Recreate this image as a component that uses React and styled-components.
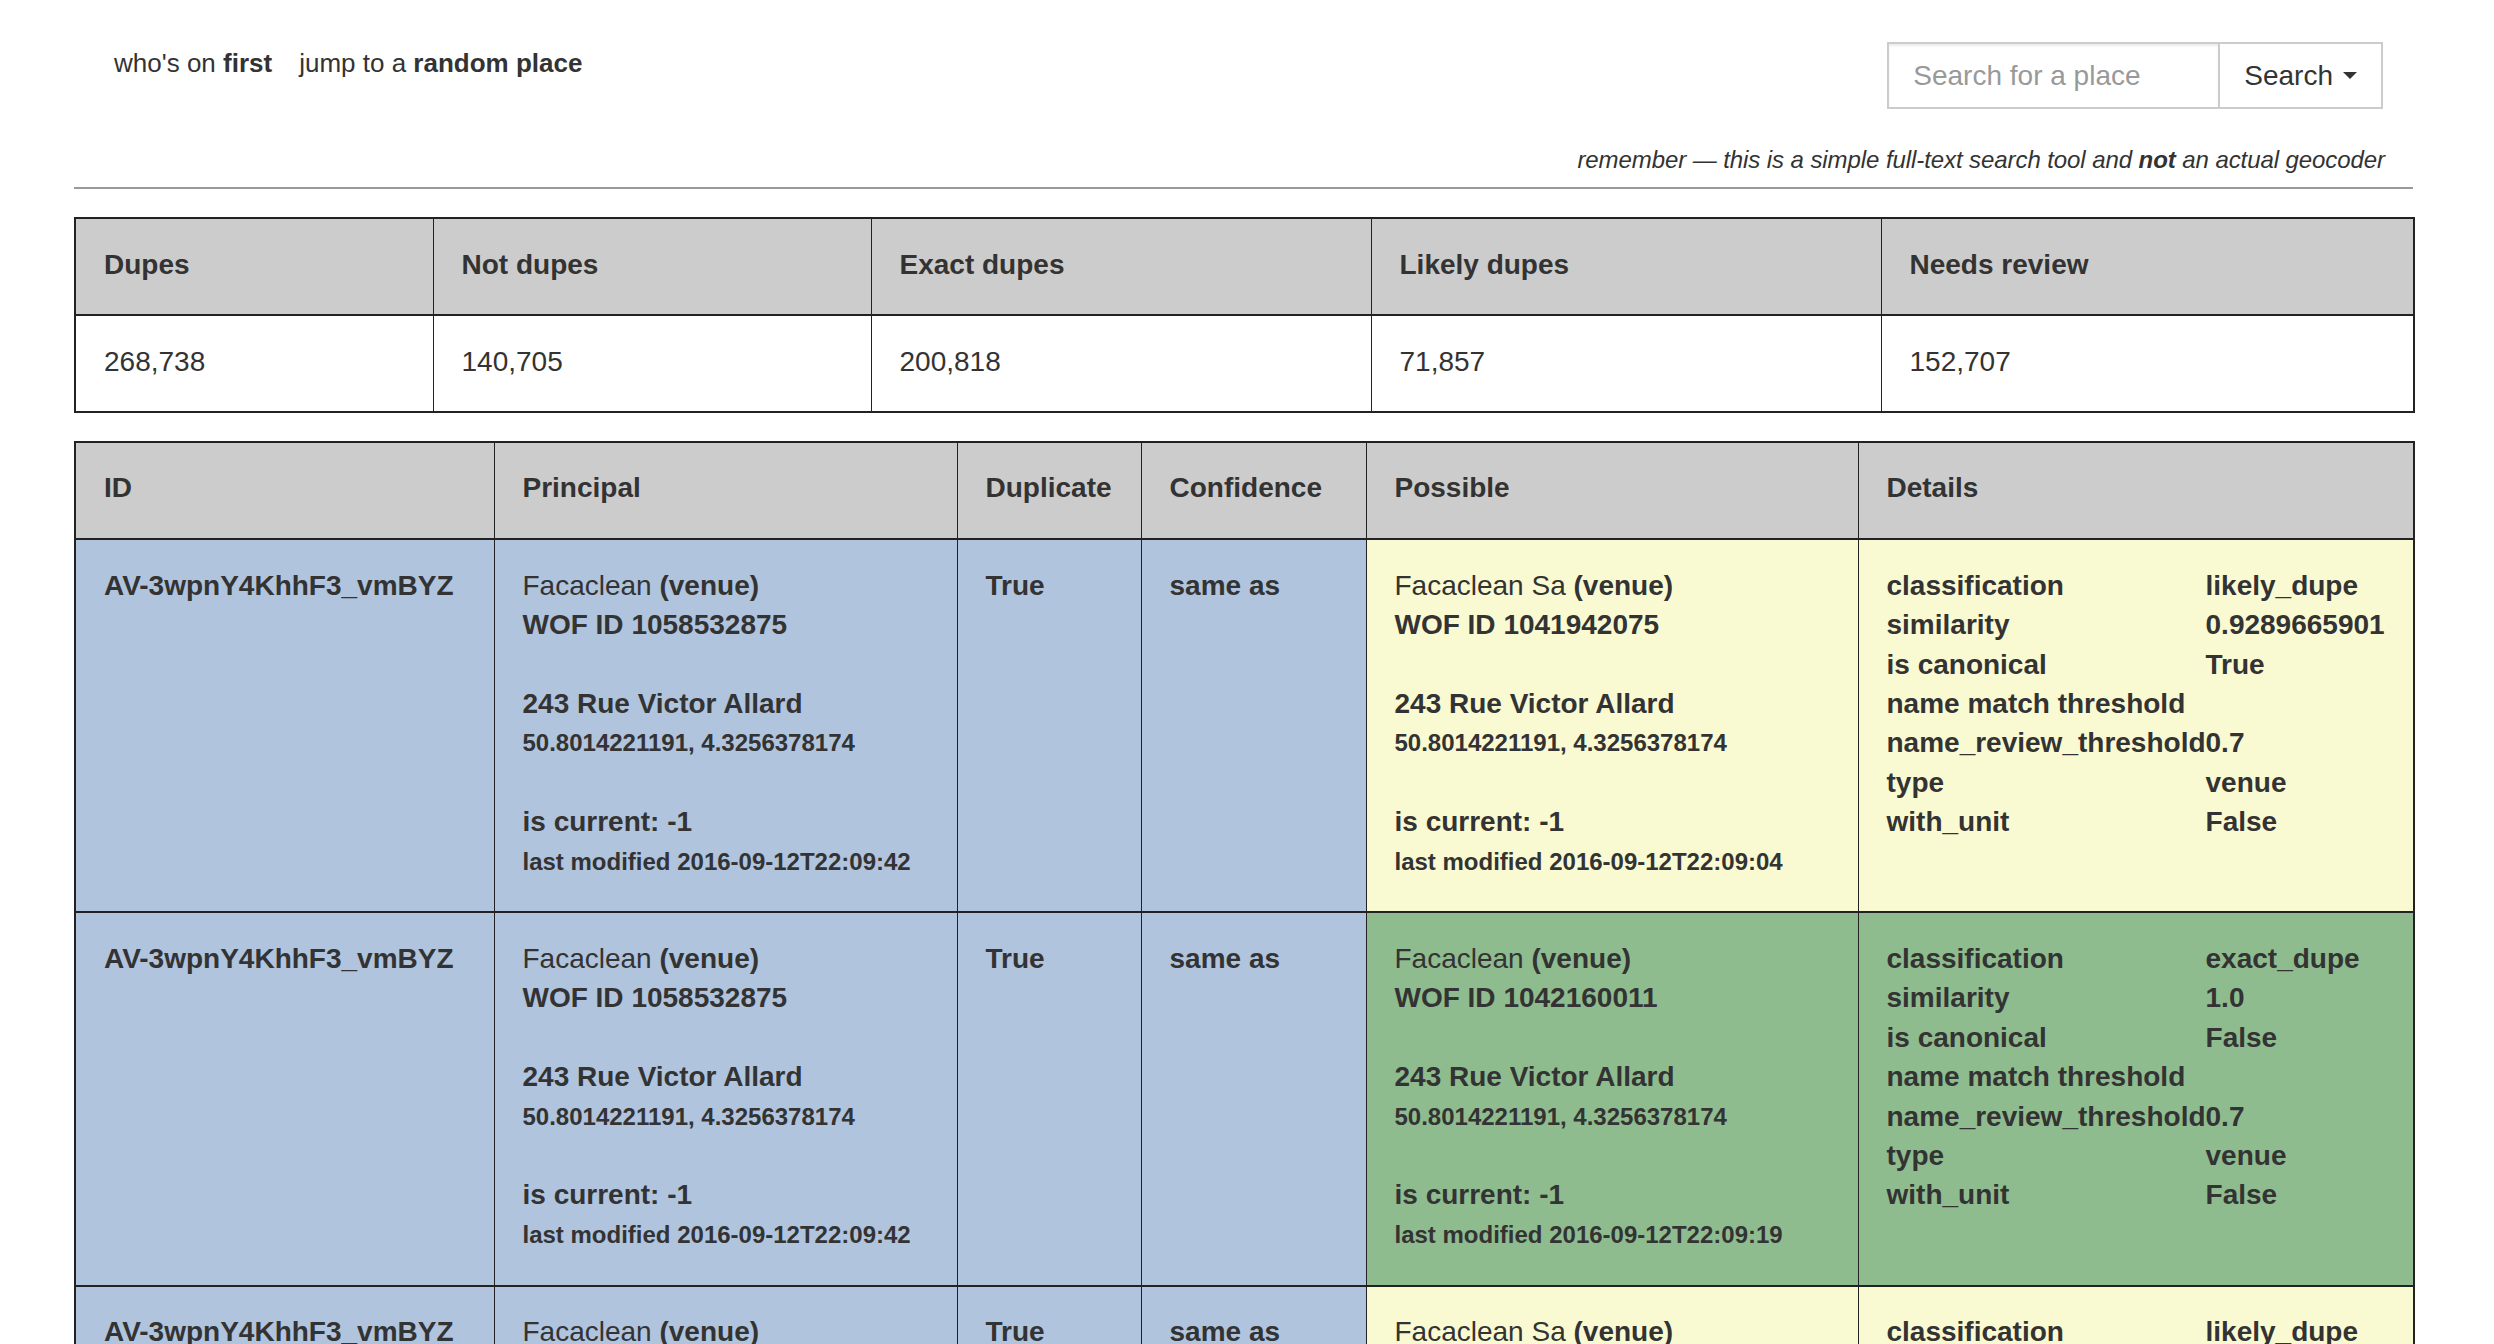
import React from 'react';
import styled, { createGlobalStyle } from 'styled-components';

const GlobalStyle = createGlobalStyle`
  html, body { margin: 0; padding: 0; background: #fff; }
  body {
    font-family: "Liberation Sans", Arial, Helvetica, sans-serif;
    color: #333;
    font-size: 28px;
    line-height: 39.4px;
  }
  * { box-sizing: border-box; }
`;

const Page = styled.div`
  width: 2339px;
  margin-left: 74px;
  padding-bottom: 80px;
`;

const Header = styled.header`
  padding: 42px 28px 0 40px;
`;

const TopRow = styled.div`
  display: flex;
  justify-content: space-between;
  align-items: flex-start;
`;

const Nav = styled.nav`
  display: flex;
  gap: 27px;
  font-size: 26px;
  line-height: 37px;
  padding-top: 3px;
`;

const NavLink = styled.a`
  color: #333;
  text-decoration: none;
  b { font-weight: bold; }
`;

const SearchForm = styled.form`
  display: flex;
  margin: 0 2px 0 0;
`;

const SearchInput = styled.input`
  width: 333px;
  height: 67px;
  border: 2px solid #ccc;
  border-radius: 0;
  padding: 0 24px;
  font-family: "Liberation Sans", Arial, sans-serif;
  font-size: 28px;
  color: #555;
  box-shadow: inset 0 2px 2px rgba(0, 0, 0, 0.075);
  outline: none;
  &::placeholder { color: #999; }
`;

const SearchButton = styled.button`
  height: 67px;
  border: 2px solid #ccc;
  border-left: none;
  border-radius: 0;
  background: #fff;
  padding: 0 24px;
  display: flex;
  align-items: center;
  gap: 10px;
  font-family: "Liberation Sans", Arial, sans-serif;
  font-size: 28px;
  color: #333;
`;

const Caret = styled.span`
  width: 0;
  height: 0;
  border-top: 7px solid #333;
  border-left: 7px solid transparent;
  border-right: 7px solid transparent;
`;

const Note = styled.p`
  margin: 34px 0 0;
  text-align: right;
  font-size: 24px;
  line-height: 34px;
  font-style: italic;
  letter-spacing: -0.08px;
`;

const Rule = styled.hr`
  margin: 10px 0 0;
  height: 0;
  border: 0;
  border-top: 2px solid #999;
`;

const Table = styled.table`
  width: 2339px;
  table-layout: fixed;
  border-collapse: collapse;
  border: 2px solid #222;
  margin-top: ${(p) => p.$top}px;
`;

const Th = styled.th`
  background: #ccc;
  text-align: left;
  font-weight: bold;
  padding: 25.5px 28px 30.5px;
  border-top: 2px solid #222;
  border-left: 1px solid #222;
  vertical-align: top;
`;

const Td = styled.td`
  background: ${(p) => p.$bg || '#fff'};
  font-weight: ${(p) => (p.$bold ? 'bold' : 'normal')};
  padding: 25.5px 28px ${(p) => (p.$tight ? '29.5px' : '30.5px')};
  border-top: 2px solid #222;
  border-left: 1px solid #222;
  vertical-align: top;
`;

const PlaceName = styled.div`
  font-weight: normal;
  b { font-weight: bold; }
`;

const Strong = styled.div`
  font-weight: bold;
  margin-top: ${(p) => (p.$gap ? '39.4px' : '0')};
`;

const Small = styled.div`
  font-weight: bold;
  font-size: 24px;
`;

const DetailTable = styled.table`
  border-collapse: collapse;
  font-weight: bold;
`;

const DetailKey = styled.td`
  padding: 0;
  white-space: nowrap;
  vertical-align: top;
`;

const DetailValue = styled.td`
  padding: 0;
  white-space: nowrap;
  vertical-align: top;
`;

const COLORS = {
  principal: '#b0c4de',
  likely: '#fafad2',
  exact: '#8fbc8f',
};

const stats = [
  ['Dupes', '268,738', 358],
  ['Not dupes', '140,705', 438],
  ['Exact dupes', '200,818', 500],
  ['Likely dupes', '71,857', 510],
  ['Needs review', '152,707', 533],
];

const mainCols = [
  ['ID', 419],
  ['Principal', 463],
  ['Duplicate', 184],
  ['Confidence', 225],
  ['Possible', 492],
  ['Details', 556],
];

const principal = {
  name: 'Facaclean',
  wof: '1058532875',
  addr: '243 Rue Victor Allard',
  coords: '50.8014221191, 4.3256378174',
  current: '-1',
  modified: '2016-09-12T22:09:42',
};

const likelyDetails = [
  ['classification', 'likely_dupe'],
  ['similarity', '0.9289665901'],
  ['is canonical', 'True'],
  ['name match threshold', ''],
  ['name_review_threshold', '0.7'],
  ['type', 'venue'],
  ['with_unit', 'False'],
];

const likelyPlace = {
  name: 'Facaclean Sa',
  wof: '1041942075',
  addr: '243 Rue Victor Allard',
  coords: '50.8014221191, 4.3256378174',
  current: '-1',
  modified: '2016-09-12T22:09:04',
};

const rows = [
  { kind: 'likely', possible: likelyPlace, details: likelyDetails },
  {
    kind: 'exact',
    possible: {
      name: 'Facaclean',
      wof: '1042160011',
      addr: '243 Rue Victor Allard',
      coords: '50.8014221191, 4.3256378174',
      current: '-1',
      modified: '2016-09-12T22:09:19',
    },
    details: [
      ['classification', 'exact_dupe'],
      ['similarity', '1.0'],
      ['is canonical', 'False'],
      ['name match threshold', ''],
      ['name_review_threshold', '0.7'],
      ['type', 'venue'],
      ['with_unit', 'False'],
    ],
  },
  { kind: 'likely', possible: likelyPlace, details: likelyDetails },
];

function Place({ place }) {
  return (
    <>
      <PlaceName>
        {place.name} <b>(venue)</b>
      </PlaceName>
      <Strong>WOF ID {place.wof}</Strong>
      <Strong $gap>{place.addr}</Strong>
      <Small>{place.coords}</Small>
      <Strong $gap>is current: {place.current}</Strong>
      <Small>last modified {place.modified}</Small>
    </>
  );
}

export default function App() {
  return (
    <>
      <GlobalStyle />
      <Page>
        <Header>
          <TopRow>
            <Nav>
              <NavLink href="#">
                who's on <b>first</b>
              </NavLink>
              <NavLink href="#">
                jump to a <b>random place</b>
              </NavLink>
            </Nav>
            <SearchForm onSubmit={(e) => e.preventDefault()}>
              <SearchInput placeholder="Search for a place" />
              <SearchButton type="button">
                Search <Caret />
              </SearchButton>
            </SearchForm>
          </TopRow>
          <Note>
            remember — this is a simple full-text search tool and <b>not</b> an actual geocoder
          </Note>
        </Header>
        <Rule />

        <Table $top={28}>
          <colgroup>
            {stats.map(([label, , w]) => (
              <col key={label} style={{ width: w }} />
            ))}
          </colgroup>
          <thead>
            <tr>
              {stats.map(([label]) => (
                <Th key={label}>{label}</Th>
              ))}
            </tr>
          </thead>
          <tbody>
            <tr>
              {stats.map(([label, value]) => (
                <Td key={label} $tight>
                  {value}
                </Td>
              ))}
            </tr>
          </tbody>
        </Table>

        <Table $top={28}>
          <colgroup>
            {mainCols.map(([label, w]) => (
              <col key={label} style={{ width: w }} />
            ))}
          </colgroup>
          <thead>
            <tr>
              {mainCols.map(([label]) => (
                <Th key={label}>{label}</Th>
              ))}
            </tr>
          </thead>
          <tbody>
            {rows.map((row, i) => (
              <tr key={i}>
                <Td $bg={COLORS.principal} $bold>
                  AV-3wpnY4KhhF3_vmBYZ
                </Td>
                <Td $bg={COLORS.principal}>
                  <Place place={principal} />
                </Td>
                <Td $bg={COLORS.principal} $bold>
                  True
                </Td>
                <Td $bg={COLORS.principal} $bold>
                  same as
                </Td>
                <Td $bg={COLORS[row.kind]}>
                  <Place place={row.possible} />
                </Td>
                <Td $bg={COLORS[row.kind]}>
                  <DetailTable>
                    <tbody>
                      {row.details.map(([k, v]) => (
                        <tr key={k}>
                          <DetailKey>{k}</DetailKey>
                          <DetailValue>{v}</DetailValue>
                        </tr>
                      ))}
                    </tbody>
                  </DetailTable>
                </Td>
              </tr>
            ))}
          </tbody>
        </Table>
      </Page>
    </>
  );
}
